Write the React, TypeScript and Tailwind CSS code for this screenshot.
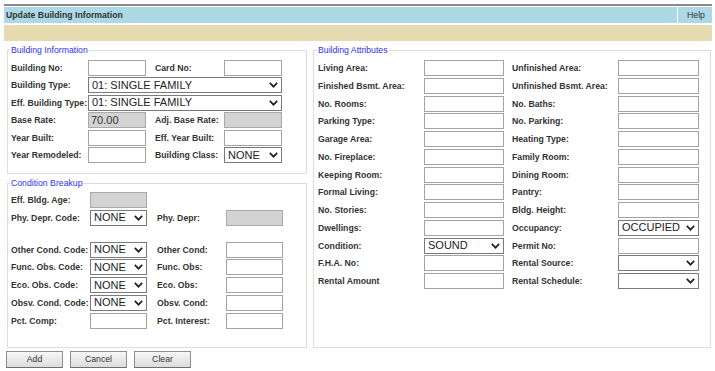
import React from "react";

type C = { children?: React.ReactNode };

const L = ({ children }: C) => (
  <div className="text-[8.7px] font-bold leading-[10px] text-[#333] whitespace-nowrap">{children}</div>
);

const T = ({ v }: { v?: string }) => (
  <div className="h-[16px] border border-[#a3a3a3] bg-white pl-[2px] text-[11px] leading-[14px] text-[#333]">{v}</div>
);

const D = ({ v }: { v?: string }) => (
  <div className="h-[16px] border border-[#a9a9a9] bg-[#d3d3d3] pl-[2px] text-[11px] leading-[14px] text-[#333]">{v}</div>
);

const Chev = () => (
  <svg width="9" height="6" viewBox="0 0 9 6" className="shrink-0">
    <path d="M0.8 0.9 L4.5 4.7 L8.2 0.9" fill="none" stroke="#222" strokeWidth="1.7" />
  </svg>
);

const S = ({ v, span }: { v?: string; span?: boolean }) => (
  <div
    className={
      span
        ? "col-span-4 h-[16px] border border-[#7a7a7a] bg-white flex items-center justify-between pl-[3px] pr-[3px] text-[11px] leading-none text-[#222]"
        : "h-[16px] border border-[#7a7a7a] bg-white flex items-center justify-between pl-[3px] pr-[3px] text-[11px] leading-none text-[#222]"
    }
  >
    <span>{v}</span>
    <Chev />
  </div>
);

const E = () => <div />;

const Legend = ({ children }: C) => (
  <legend className="-ml-px px-px text-[8.7px] leading-[10px] text-[#3030f0]">{children}</legend>
);

export default function App() {
  return (
    <div className="w-[715px] h-[371px] bg-white font-['Liberation_Sans',Arial,sans-serif] text-[#333] overflow-hidden">
      <div className="pt-[4px] pl-[4px] pr-[3px]">
        <div className="h-[2px] bg-[#8a8a8a]" />
        <div className="mt-[1px] flex h-[16px] bg-[#add8e6]">
          <div className="flex-1 flex items-center pl-[2px] text-[8.7px] font-bold leading-none text-[#333]">
            Update Building Information
          </div>
          <div className="w-px bg-white" />
          <div className="w-[34px] flex items-center justify-center pl-[2px] text-[8.7px] leading-none text-[#333]">
            Help
          </div>
        </div>
        <div className="mt-[2px] h-[16px] bg-[#e6dbb0]" />
      </div>

      <div className="mt-[4px] flex h-[303px] gap-[6px] pl-[7px] pr-[4px]">
        <div className="w-[300px] flex flex-col gap-[4px]">
          <fieldset className="border border-[#dcdcdc] px-[3px] pt-[5px] pb-[10px]">
            <Legend>Building Information</Legend>
            <div className="grid grid-cols-[77px_58px_9px_69px_58px] items-center gap-y-[1.45px]">
              <L>Building No:</L>
              <T />
              <E />
              <L>Card No:</L>
              <T />

              <L>Building Type:</L>
              <S v="01: SINGLE FAMILY" span />

              <L>Eff. Building Type:</L>
              <S v="01: SINGLE FAMILY" span />

              <L>Base Rate:</L>
              <D v="70.00" />
              <E />
              <L>Adj. Base Rate:</L>
              <D />

              <L>Year Built:</L>
              <T />
              <E />
              <L>Eff. Year Built:</L>
              <T />

              <L>Year Remodeled:</L>
              <T />
              <E />
              <L>Building Class:</L>
              <S v="NONE" />
            </div>
          </fieldset>

          <fieldset className="flex-1 border border-[#dcdcdc] px-[3px] pt-[4px]">
            <Legend>Condition Breakup</Legend>
            <div className="grid grid-cols-[79px_57px_10px_69px_57px] items-center gap-y-[1.8px]">
              <L>Eff. Bldg. Age:</L>
              <D />
              <E />
              <E />
              <E />

              <L>Phy. Depr. Code:</L>
              <S v="NONE" />
              <E />
              <L>Phy. Depr:</L>
              <D />

              <div className="col-span-5 h-[12px]" />

              <L>Other Cond. Code:</L>
              <S v="NONE" />
              <E />
              <L>Other Cond:</L>
              <T />

              <L>Func. Obs. Code:</L>
              <S v="NONE" />
              <E />
              <L>Func. Obs:</L>
              <T />

              <L>Eco. Obs. Code:</L>
              <S v="NONE" />
              <E />
              <L>Eco. Obs:</L>
              <T />

              <L>Obsv. Cond. Code:</L>
              <S v="NONE" />
              <E />
              <L>Obsv. Cond:</L>
              <T />

              <L>Pct. Comp:</L>
              <T />
              <E />
              <L>Pct. Interest:</L>
              <T />
            </div>
          </fieldset>
        </div>

        <fieldset className="w-[398px] border border-[#dcdcdc] px-[4px] pt-[5px]">
          <Legend>Building Attributes</Legend>
          <div className="grid grid-cols-[106px_80px_8px_106px_81px] items-center gap-y-[1.75px]">
            <L>Living Area:</L>
            <T />
            <E />
            <L>Unfinished Area:</L>
            <T />

            <L>Finished Bsmt. Area:</L>
            <T />
            <E />
            <L>Unfinished Bsmt. Area:</L>
            <T />

            <L>No. Rooms:</L>
            <T />
            <E />
            <L>No. Baths:</L>
            <T />

            <L>Parking Type:</L>
            <T />
            <E />
            <L>No. Parking:</L>
            <T />

            <L>Garage Area:</L>
            <T />
            <E />
            <L>Heating Type:</L>
            <T />

            <L>No. Fireplace:</L>
            <T />
            <E />
            <L>Family Room:</L>
            <T />

            <L>Keeping Room:</L>
            <T />
            <E />
            <L>Dining Room:</L>
            <T />

            <L>Formal Living:</L>
            <T />
            <E />
            <L>Pantry:</L>
            <T />

            <L>No. Stories:</L>
            <T />
            <E />
            <L>Bldg. Height:</L>
            <T />

            <L>Dwellings:</L>
            <T />
            <E />
            <L>Occupancy:</L>
            <S v="OCCUPIED" />

            <L>Condition:</L>
            <S v="SOUND" />
            <E />
            <L>Permit No:</L>
            <T />

            <L>F.H.A. No:</L>
            <T />
            <E />
            <L>Rental Source:</L>
            <S v="" />

            <L>Rental Amount</L>
            <T />
            <E />
            <L>Rental Schedule:</L>
            <S v="" />
          </div>
        </fieldset>
      </div>

      <div className="mt-[3px] flex gap-[7px] pl-[6px]">
        {["Add", "Cancel", "Clear"].map((b) => (
          <div
            key={b}
            className="w-[57px] h-[17px] border border-[#8e8e8e] border-b-[#6e6e6e] bg-gradient-to-b from-[#f7f7f7] to-[#dcdcdc] flex items-center justify-center text-[8.7px] leading-none text-[#333]"
          >
            {b}
          </div>
        ))}
      </div>
    </div>
  );
}
